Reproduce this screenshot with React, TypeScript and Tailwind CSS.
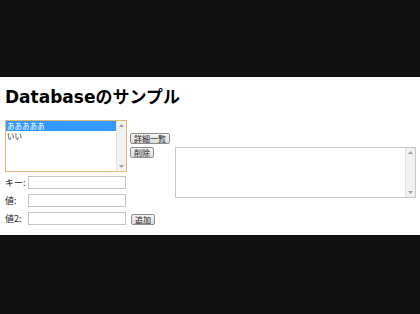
const items = ["あああああ", "いい"];

const jp = "font-['Noto_Sans_CJK_JP',sans-serif]";

function Arrow({ up }: { up?: boolean }) {
  return (
    <div className="flex h-[9px] w-full items-center justify-center">
      <svg width="5" height="3" viewBox="0 0 5 3">
        <path d={up ? "M0 3 L2.5 0 L5 3 Z" : "M0 0 L2.5 3 L5 0 Z"} fill="#a0a0a0" />
      </svg>
    </div>
  );
}

function ScrollBar() {
  return (
    <div className="flex w-[10px] shrink-0 flex-col justify-between border-l border-[#e4e4e4] bg-[#f1f1f1]">
      <Arrow up />
      <Arrow />
    </div>
  );
}

function Btn({ label }: { label: string }) {
  return (
    <button
      className={`${jp} flex h-[11px] shrink-0 items-center whitespace-nowrap rounded-[2px] border border-[#8e8e8e] bg-gradient-to-b from-[#f4f4f4] to-[#dcdcdc] px-[3px] text-[8px] leading-none text-[#222]`}
    >
      {label}
    </button>
  );
}

function Field({ label, children }: { label: string; children?: React.ReactNode }) {
  return (
    <div className="flex h-[13px] items-end">
      <span className={`${jp} w-[23px] self-center whitespace-nowrap text-[9px] leading-none text-[#222]`}>{label}</span>
      <input className="h-[13px] w-[98px] border border-[#c4c4c4] bg-white" />
      {children}
    </div>
  );
}

export default function App() {
  return (
    <div className="flex h-[314px] w-[420px] flex-col bg-[#111111]">
      <div className="h-[77px] shrink-0" />
      <div className="h-[158px] shrink-0 bg-white px-[5px]">
        <h1 className="pt-[10px] font-['DejaVu_Sans','Noto_Sans_CJK_JP',sans-serif] text-[17px] font-bold leading-[20px] text-black">
          Databaseのサンプル
        </h1>
        <div className="mt-[13px] flex items-start">
          <div className="flex shrink-0 flex-col">
            <div className="flex items-start">
              <div className="flex h-[52px] w-[122px] border border-[#ddb87a] bg-white">
                <div className={`${jp} flex-1 text-[7.5px] leading-[10px]`}>
                  {items.map((it, i) => (
                    <div
                      key={it}
                      className={i === 0 ? "h-[10px] bg-[#3399ff] pl-[1px] text-white" : "h-[10px] pl-[1px] text-[#222]"}
                    >
                      {it}
                    </div>
                  ))}
                </div>
                <ScrollBar />
              </div>
              <div className="ml-[3px] mt-[13px] flex flex-col items-start gap-[3px]">
                <Btn label="詳細一覧" />
                <Btn label="削除" />
              </div>
            </div>
            <div className="mt-[4px] flex flex-col gap-[5px]">
              <Field label="キー:" />
              <Field label="値:" />
              <Field label="値2:">
                <div className="ml-[5px]">
                  <Btn label="追加" />
                </div>
              </Field>
            </div>
          </div>
          <div className="ml-[5px] mt-[27px] flex h-[51px] w-[241px] shrink-0 justify-end border border-[#c8c8c8] bg-white">
            <ScrollBar />
          </div>
        </div>
      </div>
      <div className="flex-1" />
    </div>
  );
}
